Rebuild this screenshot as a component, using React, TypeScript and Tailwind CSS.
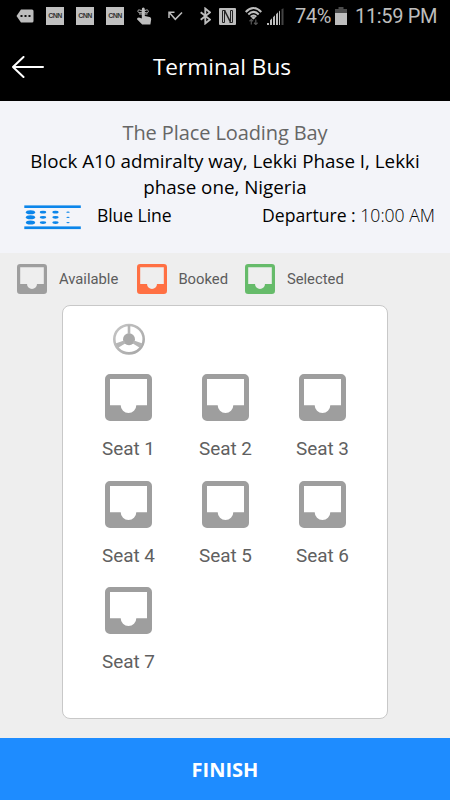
interface Seat {
  id: number;
  label: string;
}

const SEATS: Seat[] = [1, 2, 3, 4, 5, 6, 7].map((id) => ({ id, label: `Seat ${id}` }));

const LEGEND = [
  { label: "Available", icon: "text-[#9e9e9e]", text: "w-[78px]" },
  { label: "Booked", icon: "text-[#ff7043]", text: "w-[67px]" },
  { label: "Selected", icon: "text-[#66bb6a]", text: "w-[78px]" },
];

const SeatIcon = ({ className }: { className: string }) => (
  <svg viewBox="0 0 47 47" fill="currentColor" className={className}>
    <path
      fillRule="evenodd"
      d="M5 0H42A5 5 0 0 1 47 5V42A5 5 0 0 1 42 47H5A5 5 0 0 1 0 42V5A5 5 0 0 1 5 0ZM5 5V31.3H15.7A7.8 7.8 0 0 0 31.3 31.3H42V5Z"
    />
  </svg>
);

const SteeringWheel = () => (
  <svg viewBox="0 0 34 34" className="w-[34px] h-[34px]">
    <defs>
      <linearGradient id="wheel" x1="0" y1="0" x2="1" y2="1">
        <stop offset="0" stopColor="#c6c6c6" />
        <stop offset="1" stopColor="#a6a6a6" />
      </linearGradient>
    </defs>
    <ellipse cx="17" cy="17.2" rx="14.7" ry="14.2" fill="none" stroke="url(#wheel)" strokeWidth="2.6" />
    <circle cx="17" cy="17.2" r="6" fill="#a9a9a9" />
    <path d="M15.7 3h2.6v9h-2.6zM3.5 21.4 12 18.6l1.6 2.6-7.4 4.6zM30.5 21.4 22 18.6l-1.6 2.6 7.4 4.6z" fill="#b5b5b5" />
  </svg>
);

const BusIcon = () => (
  <svg viewBox="0 0 57 25" fill="#0b85ea" className="mt-[5px] w-[57px] h-[25px]">
    <rect x="0.3" y="0.4" width="56.5" height="2.6" />
    <rect x="0.3" y="21.4" width="56.5" height="2.7" />
    {[7.2, 12.3, 17.6].map((y) => (
      <g key={y}>
        <ellipse cx="6.5" cy={y} rx="4.6" ry="2" />
        <ellipse cx="19" cy={y} rx="3.2" ry="1.4" />
        <ellipse cx="31.5" cy={y} rx="3.1" ry="1.4" />
        <ellipse cx="44" cy={y} rx="1.7" ry="0.6" />
      </g>
    ))}
  </svg>
);

const CnnIcon = () => (
  <div className="mr-3 flex h-[18px] w-[18px] shrink-0 items-center justify-center bg-[#c0c0c0] font-['Liberation_Sans',sans-serif] text-[7px] leading-[18px] font-bold tracking-[-0.6px] text-[#333]">
    CNN
  </div>
);

const StatusBar = () => (
  <div className="flex h-8 items-center pl-4 text-[#bdbdbd]">
    <svg viewBox="0 0 18 14" className="w-[18px] h-3.5 mr-3 shrink-0">
      <path d="M5 0.5H16Q17.5 0.5 17.5 2V12Q17.5 13.5 16 13.5H5L0.5 7Z" fill="currentColor" />
      <path d="M4.5 6h2v2h-2zM8.5 6h2v2h-2zM12.5 6h2v2h-2z" fill="#111" />
    </svg>
    <CnnIcon />
    <CnnIcon />
    <CnnIcon />
    {/* Hand holding a string reminder */}
    <svg viewBox="0 0 16 18" className="w-4 h-[18px] mr-4 shrink-0">
      <path
        d="M5.8 6.2V2.2Q5.8 .6 7.3.6T8.8 2.2V9L13.6 10.1Q15.4 10.6 15.2 12.3L14.4 17.6H6.2L1 12.3Q.8 10.4 3 10.5L5.8 11.5Z"
        fill="currentColor"
      />
      <path d="M7.2 4.7C3 1.8 1.4 3 2 4.7S5 6 7.2 4.7C10.5 1.8 12.8 3 12.3 4.7S10 6 7.2 4.7M3 7h8.5" fill="none" stroke="currentColor" />
    </svg>
    <svg viewBox="0 0 15 10" className="w-[15px] h-2.5 mr-[17px] shrink-0">
      <path d="M1 7V1.3H6.5M1.3 1.5 7.3 8.3 14 1.5" fill="none" stroke="currentColor" strokeWidth="1.5" />
    </svg>
    <svg viewBox="0 0 11 18" className="w-[11px] h-[18px] mr-2 shrink-0">
      <path d="M.7 5.2 10 12.6 5.3 16.4V1.6L10 5.4.7 12.8" fill="none" stroke="currentColor" strokeWidth="1.9" />
    </svg>
    <svg viewBox="0 0 17 17" className="w-[17px] h-[17px] mr-[9px] shrink-0">
      <rect width="17" height="17" rx="1" fill="currentColor" />
      <path d="M6.5 2.5H3.5V14.5H5.5V3M10.5 14.5H13.5V2.5H11.5V13.5" fill="none" stroke="#222" strokeWidth="1" />
      <path d="M5.8 3 11.4 13.8" fill="none" stroke="#222" strokeWidth="1.5" />
    </svg>
    <svg viewBox="0 0 17 18" className="w-[17px] h-[18px] mr-[5px] shrink-0">
      <path d="M.7 5Q8.5-2.8 16.3 5M3.3 7.5Q8.5 2.3 13.7 7.5M5.7 9.8Q8.5 7.3 11.3 9.8" fill="none" stroke="currentColor" strokeWidth="2" />
      <path d="M8.5 9.3 10.6 10.7 8.5 12.5 6.4 10.7Z" fill="currentColor" />
      <path d="M6.3 17.5V12.5M4.5 14.2 6.3 12.5 8.1 14.2M10.8 12.5V17.5M9 15.8 10.8 17.5 12.6 15.8" fill="none" stroke="#555" strokeWidth="1.2" />
    </svg>
    <svg viewBox="0 0 17 17" className="w-[17px] h-[17px] mr-[11px] shrink-0">
      <path d="M0 15h2v2H0zM3 12.2l2-2V17H3zM6 9.2l2-2V17H6zM9 6.2l2-2V17H9zM12 3.4l1-1V17h-1z" fill="currentColor" />
      <path d="M14.5 1.2l2-1V17h-2z" fill="#444" />
    </svg>
    <span className="w-10 shrink-0 whitespace-nowrap text-[20px] leading-8 tracking-[-0.4px]">74%</span>
    <svg viewBox="0 0 12 18" className="w-3 h-[18px] mr-2 shrink-0">
      <path d="M3.5 0h5v2H12v4H0V2h3.5z" fill="#4b4b4b" />
      <path d="M0 6h12v12H0z" fill="currentColor" />
    </svg>
    <span className="whitespace-nowrap text-[20px] leading-8 tracking-[-0.35px]">11:59 PM</span>
  </div>
);

const App = () => {
  return (
    <div className="flex h-[800px] w-[450px] flex-col overflow-hidden bg-[#eeeeee] font-[Roboto,sans-serif]">
      <header className="h-[101px] bg-black">
        <StatusBar />
        <div className="grid h-[69px] grid-cols-[44px_1fr_50px] items-center">
          <button className="pl-3" aria-label="Back">
            <svg viewBox="0 0 32 22" className="h-[22px] w-8" fill="none" stroke="#fff" strokeWidth="2" strokeLinecap="round" strokeLinejoin="round">
              <path d="M11.5 1 1 11 11.5 21M1 11H31" />
            </svg>
          </button>
          <h1 className="pt-px text-center font-['Open_Sans',sans-serif] text-[22.6px] text-white">Terminal Bus</h1>
        </div>
      </header>

      {/* Trip details */}
      <section className="h-[152px] bg-[#f3f4f9] pt-[18px] font-['Open_Sans',sans-serif] text-black">
        <h2 className="text-center text-[20px] tracking-[-0.1px] leading-7 text-[#666]">The Place Loading Bay</h2>
        <p className="mx-auto mt-px w-[420px] text-center text-[18.8px] leading-[26px]">
          Block A10 admiralty way, Lekki Phase I, Lekki
          <br />
          phase one, Nigeria
        </p>
        <div className="flex items-center pr-[15px] pl-6 text-[17.6px] leading-7">
          <BusIcon />
          <span className="ml-4 tracking-[-0.1px]">Blue Line</span>
          <span className="ml-auto">
            Departure : <span className="font-light">10:00 AM</span>
          </span>
        </div>
      </section>

      <main className="h-[485px]">
        <div className="flex h-[52px] items-center pl-[17.4px]">
          {LEGEND.map((item) => (
            <div key={item.label} className="flex items-center">
              <SeatIcon className={`h-[30px] w-[30px] ${item.icon}`} />
              <span className={`ml-[11.5px] whitespace-nowrap text-[14.8px] text-[#5c5c5c] ${item.text}`}>{item.label}</span>
            </div>
          ))}
        </div>

        <div className="ml-[62px] h-[414px] w-[326px] rounded-lg border border-[#c8c8c8] bg-white pt-4 pl-[17px]">
          <div className="flex w-[97px] justify-center">
            <SteeringWheel />
          </div>
          <div className="grid grid-cols-[97px_97px_97px] pt-[18px]">
            {SEATS.map((seat) => (
              <button key={seat.id} className="flex h-[106.5px] flex-col items-center">
                <SeatIcon className="h-[47px] w-[47px] text-[#9e9e9e]" />
                <span className="mt-[14px] text-[18.9px] leading-7 text-[#606060]">{seat.label}</span>
              </button>
            ))}
          </div>
        </div>
      </main>

      <button className="h-[62px] bg-[#1e8cff] pt-0.5 font-['Open_Sans',sans-serif] text-[20px] font-bold text-white">FINISH</button>
    </div>
  );
};

export default App;
